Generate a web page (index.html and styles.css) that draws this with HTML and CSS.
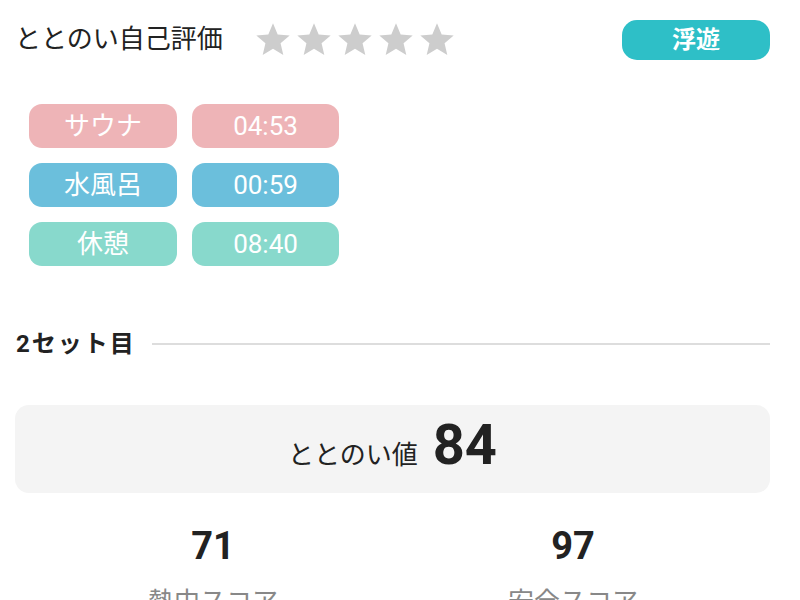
FILE: index.html
```html
<!DOCTYPE html>
<html lang="ja">
<head>
<meta charset="utf-8">
<link rel="stylesheet" href="styles.css">
</head>
<body>
<div class="page">
  <div class="header">
    <div class="title">ととのい自己評価</div>
    <div class="stars">
      <svg class="star" viewBox="0 0 24 24"><path d="M12 17.27L18.18 21l-1.64-7.03L22 9.24l-7.19-.61L12 2 9.19 8.63 2 9.24l5.46 4.73L5.82 21z"/></svg>
      <svg class="star" viewBox="0 0 24 24"><path d="M12 17.27L18.18 21l-1.64-7.03L22 9.24l-7.19-.61L12 2 9.19 8.63 2 9.24l5.46 4.73L5.82 21z"/></svg>
      <svg class="star" viewBox="0 0 24 24"><path d="M12 17.27L18.18 21l-1.64-7.03L22 9.24l-7.19-.61L12 2 9.19 8.63 2 9.24l5.46 4.73L5.82 21z"/></svg>
      <svg class="star" viewBox="0 0 24 24"><path d="M12 17.27L18.18 21l-1.64-7.03L22 9.24l-7.19-.61L12 2 9.19 8.63 2 9.24l5.46 4.73L5.82 21z"/></svg>
      <svg class="star" viewBox="0 0 24 24"><path d="M12 17.27L18.18 21l-1.64-7.03L22 9.24l-7.19-.61L12 2 9.19 8.63 2 9.24l5.46 4.73L5.82 21z"/></svg>
    </div>
    <div class="badge">浮遊</div>
  </div>

  <div class="pills">
    <div class="pill sauna">サウナ</div>
    <div class="pill sauna">04:53</div>
    <div class="pill water">水風呂</div>
    <div class="pill water">00:59</div>
    <div class="pill rest">休憩</div>
    <div class="pill rest">08:40</div>
  </div>

  <div class="section">
    <div class="section-title">2セット目</div>
    <div class="section-line"></div>
  </div>

  <div class="total">
    <span class="total-label">ととのい値</span>
    <span class="total-value">84</span>
  </div>

  <div class="scores">
    <div class="score">
      <div class="score-value">71</div>
      <div class="score-label">熱中スコア</div>
    </div>
    <div class="score">
      <div class="score-value">97</div>
      <div class="score-label">安全スコア</div>
    </div>
  </div>
</div>
</body>
</html>
```

FILE: styles.css
```css
* { box-sizing: border-box; }
html, body { margin: 0; padding: 0; background: #fff; }
body {
  font-family: Roboto, "Noto Sans CJK JP", sans-serif;
  color: #222;
  overflow: hidden;
  height: 600px;
}
.page {
  padding: 19px 30px 0 15px;
}
.header {
  display: flex;
  align-items: center;
  height: 41px;
}
.title {
  font-size: 26px;
  line-height: 41px;
  color: #222;
}
.stars {
  display: flex;
  gap: 1px;
  margin-left: 30px;
}
.star {
  width: 40px;
  height: 40px;
  fill: #cdcdcd;
}
.badge {
  margin-left: auto;
  width: 148px;
  height: 40px;
  border-radius: 15px;
  background: #2ebfc7;
  color: #fff;
  font-weight: 700;
  font-size: 24px;
  line-height: 40px;
  text-align: center;
}
.pills {
  display: grid;
  grid-template-columns: 148px 147px;
  grid-auto-rows: 44px;
  gap: 15px;
  margin: 44px 0 0 14px;
}
.pill {
  border-radius: 13px;
  color: #fff;
  font-size: 26px;
  font-weight: 400;
  line-height: 44px;
  text-align: center;
}
.sauna { background: #eeb4b7; }
.water { background: #6bbfdc; }
.rest { background: #88d9cc; }
.section {
  display: flex;
  align-items: center;
  height: 30px;
  margin-top: 63px;
}
.section-title {
  font-size: 24px;
  font-weight: 700;
  line-height: 30px;
  letter-spacing: 2px;
  margin-left: 1px;
  color: #222;
}
.section-line {
  flex: 1;
  height: 2px;
  background: #dddddd;
  margin-left: 16px;
}
.total {
  margin-top: 46px;
  height: 88px;
  border-radius: 14px;
  background: #f4f4f4;
  display: flex;
  justify-content: center;
  align-items: baseline;
  padding-top: 10px;
}
.total-label {
  font-size: 26px;
  line-height: 60px;
  color: #222;
}
.total-value {
  font-size: 56px;
  font-weight: 700;
  line-height: 60px;
  margin-left: 15px;
  color: #222;
}
.scores {
  display: flex;
  padding: 0 17px 0 18px;
  margin-top: 31px;
}
.score {
  flex: 1;
  text-align: center;
}
.score-value {
  font-size: 38px;
  font-weight: 700;
  line-height: 44px;
  color: #222;
}
.score-label {
  margin-top: 16px;
  font-size: 26px;
  line-height: 36px;
  color: #888;
}
```
